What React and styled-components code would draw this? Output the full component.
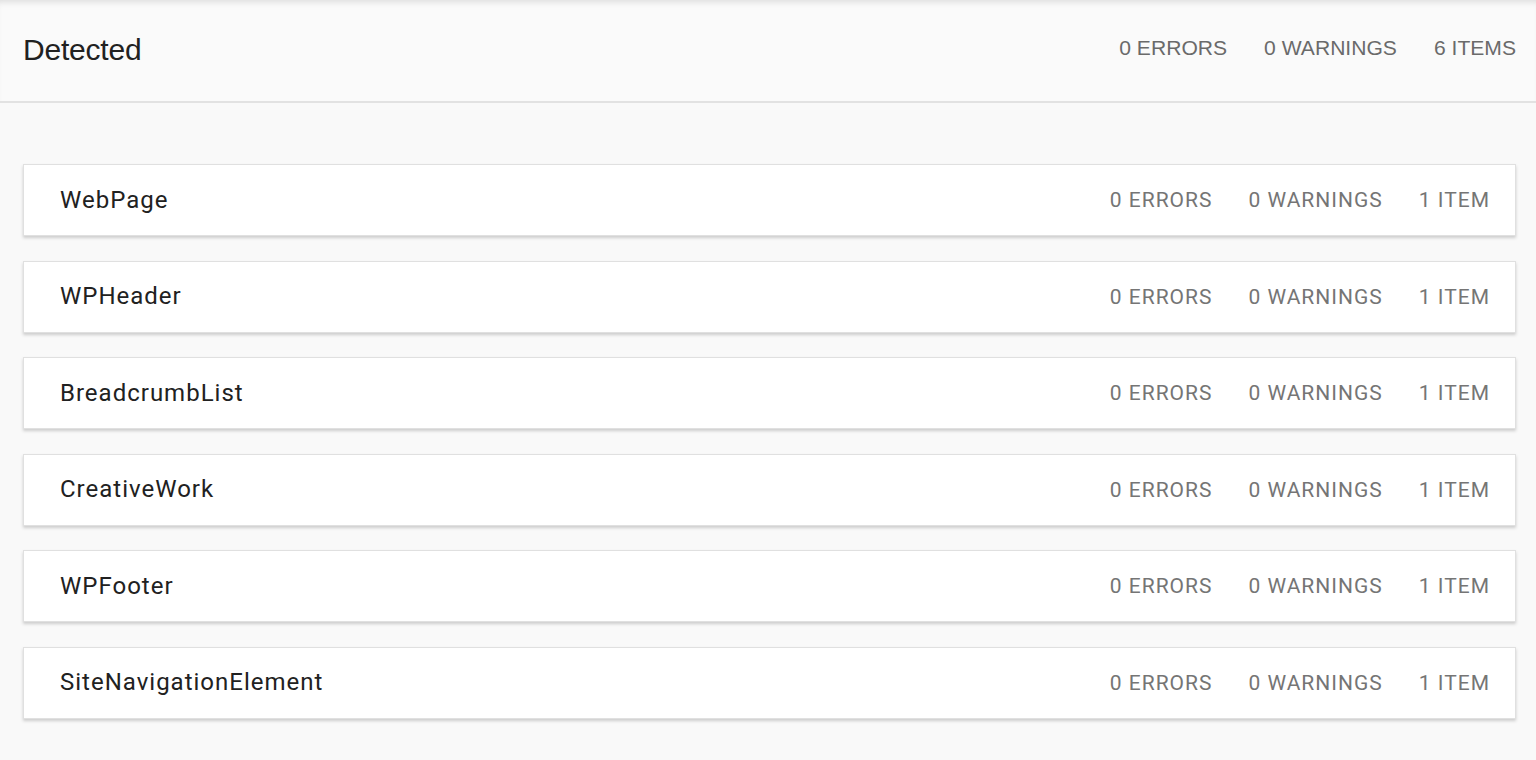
import React from "react";
import styled, { createGlobalStyle } from "styled-components";

const Global = createGlobalStyle`
  html, body { margin: 0; padding: 0; background: #f9f9f9; }
  body { font-family: Roboto, "Liberation Sans", sans-serif; }
`;

const Page = styled.div`
  min-height: 760px;
  background: #f9f9f9;
`;

const Header = styled.header`
  display: flex;
  align-items: center;
  justify-content: space-between;
  height: 103px;
  padding: 0 20px 0 23px;
  background: #fafafa;
  border-bottom: 2px solid #e2e2e2;
  box-shadow: inset 0 6px 6px -4px rgba(0, 0, 0, 0.12);
  box-sizing: border-box;
`;

const Title = styled.h1`
  margin: 0 0 2px;
  font-family: "Liberation Sans", Arial, sans-serif;
  font-weight: 400;
  font-size: 30px;
  color: #212121;
  letter-spacing: -0.2px;
`;

const HeaderStats = styled.div`
  display: flex;
  gap: 37px;
  margin-bottom: 5px;
  font-family: "Liberation Sans", Arial, sans-serif;
  font-size: 21.1px;
  color: #6a6a6a;
`;

const List = styled.main`
  display: flex;
  flex-direction: column;
  gap: 24.6px;
  padding: 61px 20px 0 23px;
`;

const Card = styled.div`
  display: flex;
  align-items: center;
  justify-content: space-between;
  height: 72px;
  padding: 0 25px 0 36px;
  background: #fff;
  border: 1px solid #e0e0e0;
  box-shadow: 0 2px 3px rgba(0, 0, 0, 0.18);
  box-sizing: border-box;
`;

const Name = styled.div`
  font-size: 24px;
  color: #212121;
  letter-spacing: 1px;
  margin-bottom: 1px;
`;

const Stats = styled.div`
  display: flex;
  gap: 36px;
  font-size: 21px;
  color: #757575;
  letter-spacing: 1px;
`;

const items = [
  "WebPage",
  "WPHeader",
  "BreadcrumbList",
  "CreativeWork",
  "WPFooter",
  "SiteNavigationElement",
];

export default function App() {
  return (
    <Page>
      <Global />
      <Header>
        <Title>Detected</Title>
        <HeaderStats>
          <span>0 ERRORS</span>
          <span>0 WARNINGS</span>
          <span>6 ITEMS</span>
        </HeaderStats>
      </Header>
      <List>
        {items.map((n) => (
          <Card key={n}>
            <Name>{n}</Name>
            <Stats>
              <span>0 ERRORS</span>
              <span>0 WARNINGS</span>
              <span>1 ITEM</span>
            </Stats>
          </Card>
        ))}
      </List>
    </Page>
  );
}
